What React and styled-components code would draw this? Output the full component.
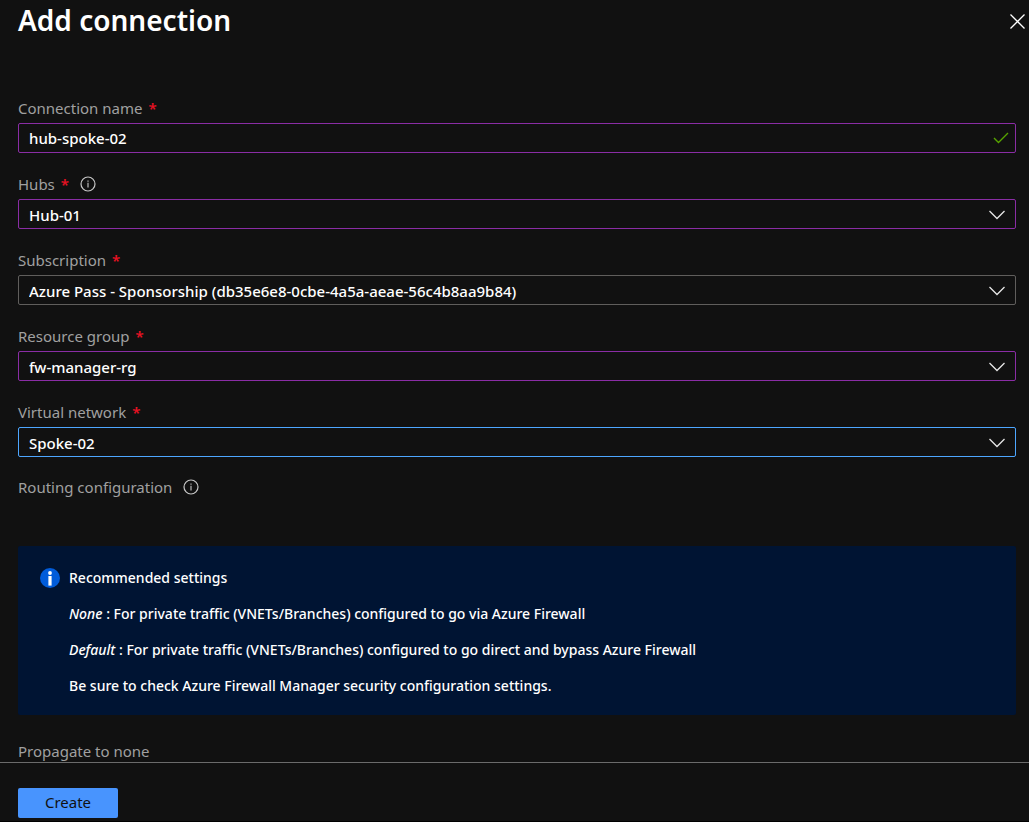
import React from "react";
import styled, { createGlobalStyle } from "styled-components";

const GlobalStyle = createGlobalStyle`
  *, *::before, *::after { box-sizing: border-box; }
  body {
    margin: 0;
    background: #111111;
    color: #ffffff;
    font-family: "Segoe UI", "Noto Sans", sans-serif;
    font-size: 15px;
    line-height: 20px;
  }
`;

const Panel = styled.main`
  display: flex;
  flex-direction: column;
  height: 100vh;
  border-bottom: 1px solid #000000;
`;

const Header = styled.header`
  display: flex;
  align-items: center;
  justify-content: space-between;
  height: 40px;
  padding: 0 3px 0 18px;
  flex: none;
`;

const Title = styled.h1`
  margin: 0;
  font-size: 28px;
  line-height: 40px;
  font-weight: 600;
`;

const CloseButton = styled.button`
  display: flex;
  padding: 0;
  border: 0;
  background: none;
  color: #ffffff;
  cursor: pointer;
`;

const Content = styled.form`
  flex: 1;
  min-height: 0;
  overflow-y: auto;
  scrollbar-width: none;
  padding: 58px 13px 0 18px;
`;

const Fields = styled.div`
  display: flex;
  flex-direction: column;
  gap: 21px;
`;

const Field = styled.div`
  display: flex;
  flex-direction: column;
  gap: 5px;
`;

const LabelRow = styled.div`
  display: flex;
  align-items: center;
  height: 20px;
  color: #a0a0a0;
`;

const Required = styled.span`
  margin-left: 6px;
  color: #e81123;
  font-weight: 600;
`;

const InfoButton = styled.button`
  display: flex;
  margin-left: 11px;
  padding: 0;
  border: 0;
  background: none;
  color: #c8c8c8;
`;

const tones = { edited: "#8a2da5", plain: "#605e5c", focused: "#4da6ff" };

const Box = styled.div`
  display: flex;
  align-items: center;
  height: 30px;
  border: 1px solid ${(p) => tones[p.$tone]};
  border-radius: 2px;
  position: relative;
`;

const controlText = `
  flex: 1;
  min-width: 0;
  height: 28px;
  margin: 0;
  padding: 0 36px 0 10px;
  border: 0;
  outline: 0;
  background: transparent;
  color: #ffffff;
  font: inherit;
  font-weight: 500;
`;

const TextInput = styled.input`
  ${controlText}
`;

const Select = styled.select`
  ${controlText}
  padding-top: 2px;
  appearance: none;
  option { background: #111111; }
`;

const Adornment = styled.span`
  position: absolute;
  right: ${(p) => p.$inset}px;
  top: 0;
  bottom: 0;
  display: flex;
  align-items: center;
  pointer-events: none;
`;

const RoutingRow = styled(LabelRow)`
  margin-top: 20px;
`;

const Notice = styled.section`
  display: flex;
  align-items: flex-start;
  gap: 9px;
  margin-top: 49px;
  padding: 22px 22px 19px;
  border-radius: 2px;
  background: #001433;
  font-size: 14px;
  font-weight: 500;
`;

const NoticeText = styled.div`
  display: flex;
  flex-direction: column;
  gap: 16px;
  p { margin: 0; }
`;

const PropagateRow = styled(LabelRow)`
  margin-top: 26px;
`;

const Footer = styled.footer`
  flex: none;
  padding: 25px 18px 3px;
  border-top: 1px solid #6b6b6b;
`;

const PrimaryButton = styled.button`
  width: 100px;
  height: 30px;
  display: block;
  padding: 0 0 2px;
  border: 0;
  border-radius: 2px;
  background: #4894fe;
  color: #111111;
  font: inherit;
  cursor: pointer;
`;

const CloseIcon = () => (
  <svg width="18" height="18" viewBox="0 0 18 18" fill="none" stroke="currentColor" strokeWidth="1.3" aria-hidden="true">
    <path d="M2.5 3.5L16.5 17.5M16.5 3.5L2.5 17.5" />
  </svg>
);

const InfoIcon = () => (
  <svg width="16" height="16" viewBox="0 0 16 16" fill="none" stroke="currentColor" aria-hidden="true">
    <circle cx="8" cy="8" r="7" strokeWidth="1.2" />
    <path d="M8 6.8V11.6M8 4.6V5.8" strokeWidth="1.1" />
  </svg>
);

const Chevron = () => (
  <svg width="16" height="12" viewBox="0 0 16 12" fill="none" stroke="#e6e6e6" strokeWidth="1.3" aria-hidden="true">
    <path d="M0.5 3L8 10.5L15.5 3" />
  </svg>
);

const CheckIcon = () => (
  <svg width="16" height="12" viewBox="0 0 16 12" fill="none" stroke="#57a300" strokeWidth="1.4" aria-hidden="true">
    <path d="M1 6L5.5 10.5L15 1" />
  </svg>
);

const NoticeIcon = () => (
  <svg width="20" height="20" viewBox="0 0 20 20" aria-hidden="true">
    <circle cx="10" cy="10" r="10" fill="#015cda" />
    <circle cx="10" cy="5" r="1.9" fill="#ffffff" />
    <rect x="8.4" y="8" width="3.2" height="9.6" fill="#ffffff" />
  </svg>
);

function Label({ htmlFor, children, required, info }) {
  return (
    <LabelRow>
      <label htmlFor={htmlFor}>
        {children}
        {required && <Required>*</Required>}
      </label>
      {info && (
        <InfoButton type="button" aria-label={`About ${children}`}>
          <InfoIcon />
        </InfoButton>
      )}
    </LabelRow>
  );
}

function SelectField({ id, label, value, tone, info }) {
  return (
    <Field>
      <Label htmlFor={id} required info={info}>{label}</Label>
      <Box $tone={tone}>
        <Select id={id} defaultValue={value}>
          <option>{value}</option>
        </Select>
        <Adornment $inset={10}><Chevron /></Adornment>
      </Box>
    </Field>
  );
}

export default function App() {
  return (
    <>
      <GlobalStyle />
      <Panel>
        <Header>
          <Title>Add connection</Title>
          <CloseButton type="button" aria-label="Close"><CloseIcon /></CloseButton>
        </Header>
        <Content id="connection" onSubmit={(e) => e.preventDefault()}>
          <Fields>
            <Field>
              <Label htmlFor="name" required>Connection name</Label>
              <Box $tone="edited">
                <TextInput id="name" type="text" defaultValue="hub-spoke-02" />
                <Adornment $inset={6}><CheckIcon /></Adornment>
              </Box>
            </Field>
            <SelectField id="hubs" label="Hubs" value="Hub-01" tone="edited" info />
            <SelectField
              id="subscription"
              label="Subscription"
              value="Azure Pass - Sponsorship (db35e6e8-0cbe-4a5a-aeae-56c4b8aa9b84)"
              tone="plain"
            />
            <SelectField id="group" label="Resource group" value="fw-manager-rg" tone="edited" />
            <SelectField id="network" label="Virtual network" value="Spoke-02" tone="focused" />
          </Fields>
          <RoutingRow>
            <span>Routing configuration</span>
            <InfoButton type="button" aria-label="About routing configuration"><InfoIcon /></InfoButton>
          </RoutingRow>
          <Notice>
            <NoticeIcon />
            <NoticeText>
              <p>Recommended settings</p>
              <p><em>None</em> : For private traffic (VNETs/Branches) configured to go via Azure Firewall</p>
              <p><em>Default</em> : For private traffic (VNETs/Branches) configured to go direct and bypass Azure Firewall</p>
              <p>Be sure to check Azure Firewall Manager security configuration settings.</p>
            </NoticeText>
          </Notice>
          <PropagateRow>Propagate to none</PropagateRow>
        </Content>
        <Footer>
          <PrimaryButton type="submit" form="connection">Create</PrimaryButton>
        </Footer>
      </Panel>
    </>
  );
}
